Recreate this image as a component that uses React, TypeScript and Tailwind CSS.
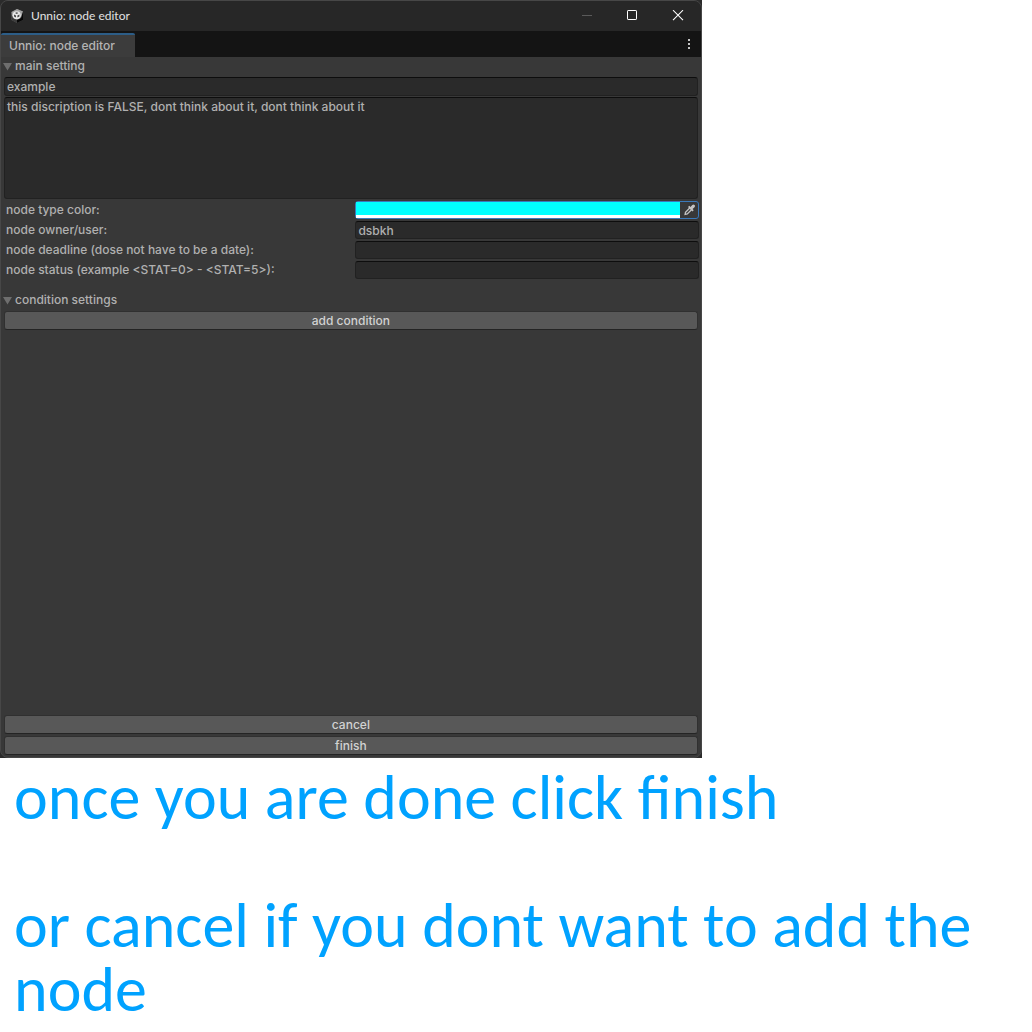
import { useState } from "react";
import type { ReactNode } from "react";

const fieldBox =
  "block w-full rounded-[3px] border border-[#212121] border-t-[#0d0d0d] bg-[#2a2a2a] px-0.5 text-[#b0b0b0] outline-none";

function UnityLogo() {
  return (
    <svg viewBox="0 0 16 16" className="h-4 w-4" aria-hidden="true">
      <path d="M8 1 14 3.6V12L8 15 2.5 12V4z" fill="#626262" />
      <path d="M8 1 14 3.6 12.5 9 8 10 3 8 2.5 4z" fill="#a3a3a3" />
      <path d="M14 3.6V12L8 15V12l4-2z" fill="#070707" />
      <path d="M2.5 9 8 12v3l-5.500-3z" fill="#3c3c3c" />
      <circle cx="7.700" cy="7.200" r="4" fill="#e8e8e8" />
      <path d="M5 6.500 7 7.600v2L5 8.400zM10.400 6.500 8.400 7.600v2l2-1.200zM7.700 4.200l1.700.9-1.700 1-1.700-1z" fill="#4a4a4a" />
    </svg>
  );
}

function TitleBar() {
  return (
    <header className="flex h-[30px] items-center bg-[#272727] pl-2">
      <UnityLogo />
      <h1 className="ml-1.5 grow font-[Lato,sans-serif] text-xs font-normal text-[#e2e2e2]">
        Unnio: node editor
      </h1>
      <button aria-label="Minimize" className="flex h-full w-[45px] items-center justify-center text-[#5a5a5a]">
        <svg viewBox="0 0 12 12" className="h-3 w-3">
          <path d="M1 5.500h10" stroke="currentColor" />
        </svg>
      </button>
      <button aria-label="Maximize" className="flex h-full w-[45px] items-center justify-center text-white">
        <svg viewBox="0 0 12 12" className="h-3 w-3" fill="none">
          <rect x="1.500" y="0.500" width="9" height="9" rx="0.600" stroke="currentColor" />
        </svg>
      </button>
      <button aria-label="Close" className="flex h-full w-[46px] items-center justify-center text-white">
        <svg viewBox="0 0 12 12" className="h-3 w-3">
          <path d="M1 0.200 11 10.200M11 0.200 1 10.200" stroke="currentColor" strokeWidth="1.100" />
        </svg>
      </button>
    </header>
  );
}

function TabBar() {
  return (
    <div className="flex h-[26px] items-end justify-between bg-[#141414]">
      <button className="h-6 rounded-t-[2px] border-t-2 border-[#2c5d87] bg-[#3c3c3c] pl-2 pr-5 text-[#b4b4b4]">
        Unnio: node editor
      </button>
      <button aria-label="Tab options" className="flex h-full w-6 items-center justify-center text-[#c4c4c4]">
        <svg viewBox="0 0 4 12" className="h-3 w-1" fill="currentColor">
          <rect x="1" y="1" width="2" height="2" />
          <rect x="1" y="5" width="2" height="2" />
          <rect x="1" y="9" width="2" height="2" />
        </svg>
      </button>
    </div>
  );
}

function Foldout({ title, children }: { title: string; children: ReactNode }) {
  const [open, setOpen] = useState(true);
  return (
    <section>
      <button
        aria-expanded={open}
        onClick={() => setOpen(!open)}
        className="flex h-5 w-full items-start gap-0.5 pl-0.5 text-left leading-[18px]"
      >
        <svg viewBox="0 0 10 8" className="mt-1.5 h-2 w-2.5" fill="#6e6e6e">
          <path d="M0 0h9L4.500 7.500z" />
        </svg>
        {title}
      </button>
      {open && children}
    </section>
  );
}

function Row({ id, label, children }: { id: string; label: string; children: ReactNode }) {
  return (
    <div className="grid h-[18px] grid-cols-2 items-start gap-2">
      <label htmlFor={id} className="whitespace-nowrap pl-0.5 leading-[18px]">
        {label}
      </label>
      {children}
    </div>
  );
}

function Eyedropper() {
  return (
    <svg viewBox="0 0 12 12" className="h-3 w-3" aria-hidden="true">
      <path d="M6.700 4 2.500 8.200 2.100 10.400l2.200-.5L8.500 5.800" fill="none" stroke="#c4c4c4" strokeWidth="1.300" />
      <path d="M5 3 6.300 1.800 7.500 2.900 9.300 1q1.200-1 2.200 0t0 2.200L9.600 5l1.100 1.200L9.500 7.500z" fill="#c4c4c4" />
    </svg>
  );
}

function PanelButton({ children }: { children: ReactNode }) {
  return (
    <button className="block h-[19px] w-full rounded-[3px] border border-[#303030] border-b-[#242424] bg-[#585858] text-center leading-4 text-[#d2d2d2]">
      {children}
    </button>
  );
}

function EditorWindow() {
  return (
    <div className="flex w-[68%] grow flex-col bg-[#2b2b2b]">
      <main className="flex grow flex-col overflow-hidden rounded-lg border border-[#474747] bg-[#383838] font-[Inter,sans-serif] text-xs font-medium leading-4 text-[#b0b0b0]">
        <TitleBar />
        <TabBar />
        <Foldout title="main setting">
          <div className="flex flex-col gap-px pl-[3px] pr-[3px]">
            <input aria-label="Node name" defaultValue="example" className={fieldBox + " h-[19px]"} />
            <textarea
              aria-label="Node description"
              defaultValue="this discription is FALSE, dont think about it, dont think about it"
              className={fieldBox + " h-[102px] resize-none pt-px"}
            />
          </div>
          <div className="flex flex-col gap-0.5 pl-[3px] pr-0.5 pt-0.5">
            <Row id="color" label="node type color:">
              <div className="flex h-[18px] rounded-[3px] border border-[#3a79bb]">
                <div className="h-4 grow border-b-[3px] border-white bg-[#00ffff]">
                  <input
                    id="color"
                    type="color"
                    defaultValue="#00ffff"
                    className="block h-full w-full appearance-none bg-transparent p-0 [&::-webkit-color-swatch-wrapper]:p-0 [&::-webkit-color-swatch]:rounded-none [&::-webkit-color-swatch]:border-0"
                  />
                </div>
                <button aria-label="Pick color" className="flex w-[18px] items-center justify-center">
                  <Eyedropper />
                </button>
              </div>
            </Row>
            <Row id="owner" label="node owner/user:">
              <input id="owner" defaultValue="dsbkh" className={fieldBox + " h-[18px]"} />
            </Row>
            <Row id="deadline" label="node deadline (dose not have to be a date):">
              <input id="deadline" className={fieldBox + " h-[18px]"} />
            </Row>
            <Row id="status" label="node status (example <STAT=0> - <STAT=5>):">
              <input id="status" className={fieldBox + " h-[18px]"} />
            </Row>
          </div>
        </Foldout>
        <div className="pt-3">
          <Foldout title="condition settings">
            <div className="px-[3px]">
              <PanelButton>add condition</PanelButton>
            </div>
          </Foldout>
        </div>
        <footer className="mt-auto flex flex-col gap-0.5 px-[3px] pb-0.5">
          <PanelButton>cancel</PanelButton>
          <PanelButton>finish</PanelButton>
        </footer>
      </main>
    </div>
  );
}

export default function App() {
  return (
    <div className="flex min-h-screen flex-col bg-white">
      <EditorWindow />
      <div className="flex flex-col gap-16 px-3.5 pb-[11px] pt-[7px] font-[Carlito,Lato,sans-serif] text-[64px] leading-[64px] text-[#00a2ff]">
        <p>once you are done click finish</p>
        <p>or cancel if you dont want to add the node</p>
      </div>
    </div>
  );
}
